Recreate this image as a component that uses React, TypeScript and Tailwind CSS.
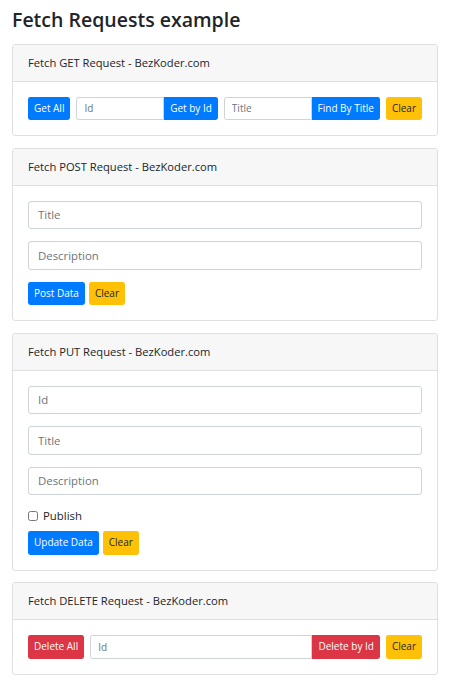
import React from 'react';

const font = { fontFamily: '"Open Sans", "Noto Sans", sans-serif' };

const btnBase = 'h-[23.5px] px-[6px] text-[10px] leading-[15px] rounded-[2.4px] shrink-0 whitespace-nowrap';
const blue = 'bg-[#007bff] text-white';
const yellow = 'bg-[#ffc107] text-[#212529]';
const red = 'bg-[#dc3545] text-white';

const Card = ({ title, children }: { title: string; children: React.ReactNode }) => (
  <div className="mt-[11.5px] first:mt-0 rounded-[3px] border border-[#dfdfdf] bg-white">
    <div className="h-[37px] px-[15px] py-[9px] bg-[#f7f7f7] border-b border-[#dfdfdf] text-[11.2px] leading-[18px] text-[#212529] rounded-t-[3px]">
      {title}
    </div>
    <div className="p-[15px]">{children}</div>
  </div>
);

const Field = ({ placeholder }: { placeholder: string }) => (
  <input
    placeholder={placeholder}
    className="block w-full h-[28.5px] mb-[12px] px-[9px] text-[11.4px] border border-[#ced4da] rounded-[3px] placeholder:text-[#6c757d] outline-none"
  />
);

const SmallGroup = ({ placeholder, label, color }: { placeholder: string; label: string; color: string }) => (
  <div className="flex grow">
    <input
      placeholder={placeholder}
      className="w-0 min-w-0 grow h-[23.5px] px-[7px] text-[10px] border border-[#ced4da] rounded-l-[2.4px] placeholder:text-[#6c757d] outline-none"
    />
    <button className={`h-[23.5px] px-[6px] text-[10px] rounded-r-[2.4px] shrink-0 whitespace-nowrap ${color}`}>{label}</button>
  </div>
);

export default function App() {
  return (
    <div className="min-h-screen bg-white px-[12px] pt-[7px] pb-4 text-[#212529]" style={font}>
      <h3 className="text-[19.5px] leading-[25px] font-semibold mb-[10px]">Fetch Requests example</h3>

      <Card title="Fetch GET Request - BezKoder.com">
        <div className="flex gap-[6px]">
          <button className={`${btnBase} ${blue}`}>Get All</button>
          <SmallGroup placeholder="Id" label="Get by Id" color={blue} />
          <SmallGroup placeholder="Title" label="Find By Title" color={blue} />
          <button className={`${btnBase} ${yellow}`}>Clear</button>
        </div>
      </Card>

      <Card title="Fetch POST Request - BezKoder.com">
        <Field placeholder="Title" />
        <Field placeholder="Description" />
        <div className="flex gap-[4px]">
          <button className={`${btnBase} ${blue}`}>Post Data</button>
          <button className={`${btnBase} ${yellow}`}>Clear</button>
        </div>
      </Card>

      <Card title="Fetch PUT Request - BezKoder.com">
        <Field placeholder="Id" />
        <Field placeholder="Title" />
        <Field placeholder="Description" />
        <label className="flex items-center h-[18px] mb-[6px] text-[11.4px]">
          <input type="checkbox" className="w-[10px] h-[10px] mr-[5px]" />
          Publish
        </label>
        <div className="flex gap-[4px]">
          <button className={`${btnBase} ${blue}`}>Update Data</button>
          <button className={`${btnBase} ${yellow}`}>Clear</button>
        </div>
      </Card>

      <Card title="Fetch DELETE Request - BezKoder.com">
        <div className="flex gap-[6px]">
          <button className={`${btnBase} ${red}`}>Delete All</button>
          <SmallGroup placeholder="Id" label="Delete by Id" color={red} />
          <button className={`${btnBase} ${yellow}`}>Clear</button>
        </div>
      </Card>
    </div>
  );
}
